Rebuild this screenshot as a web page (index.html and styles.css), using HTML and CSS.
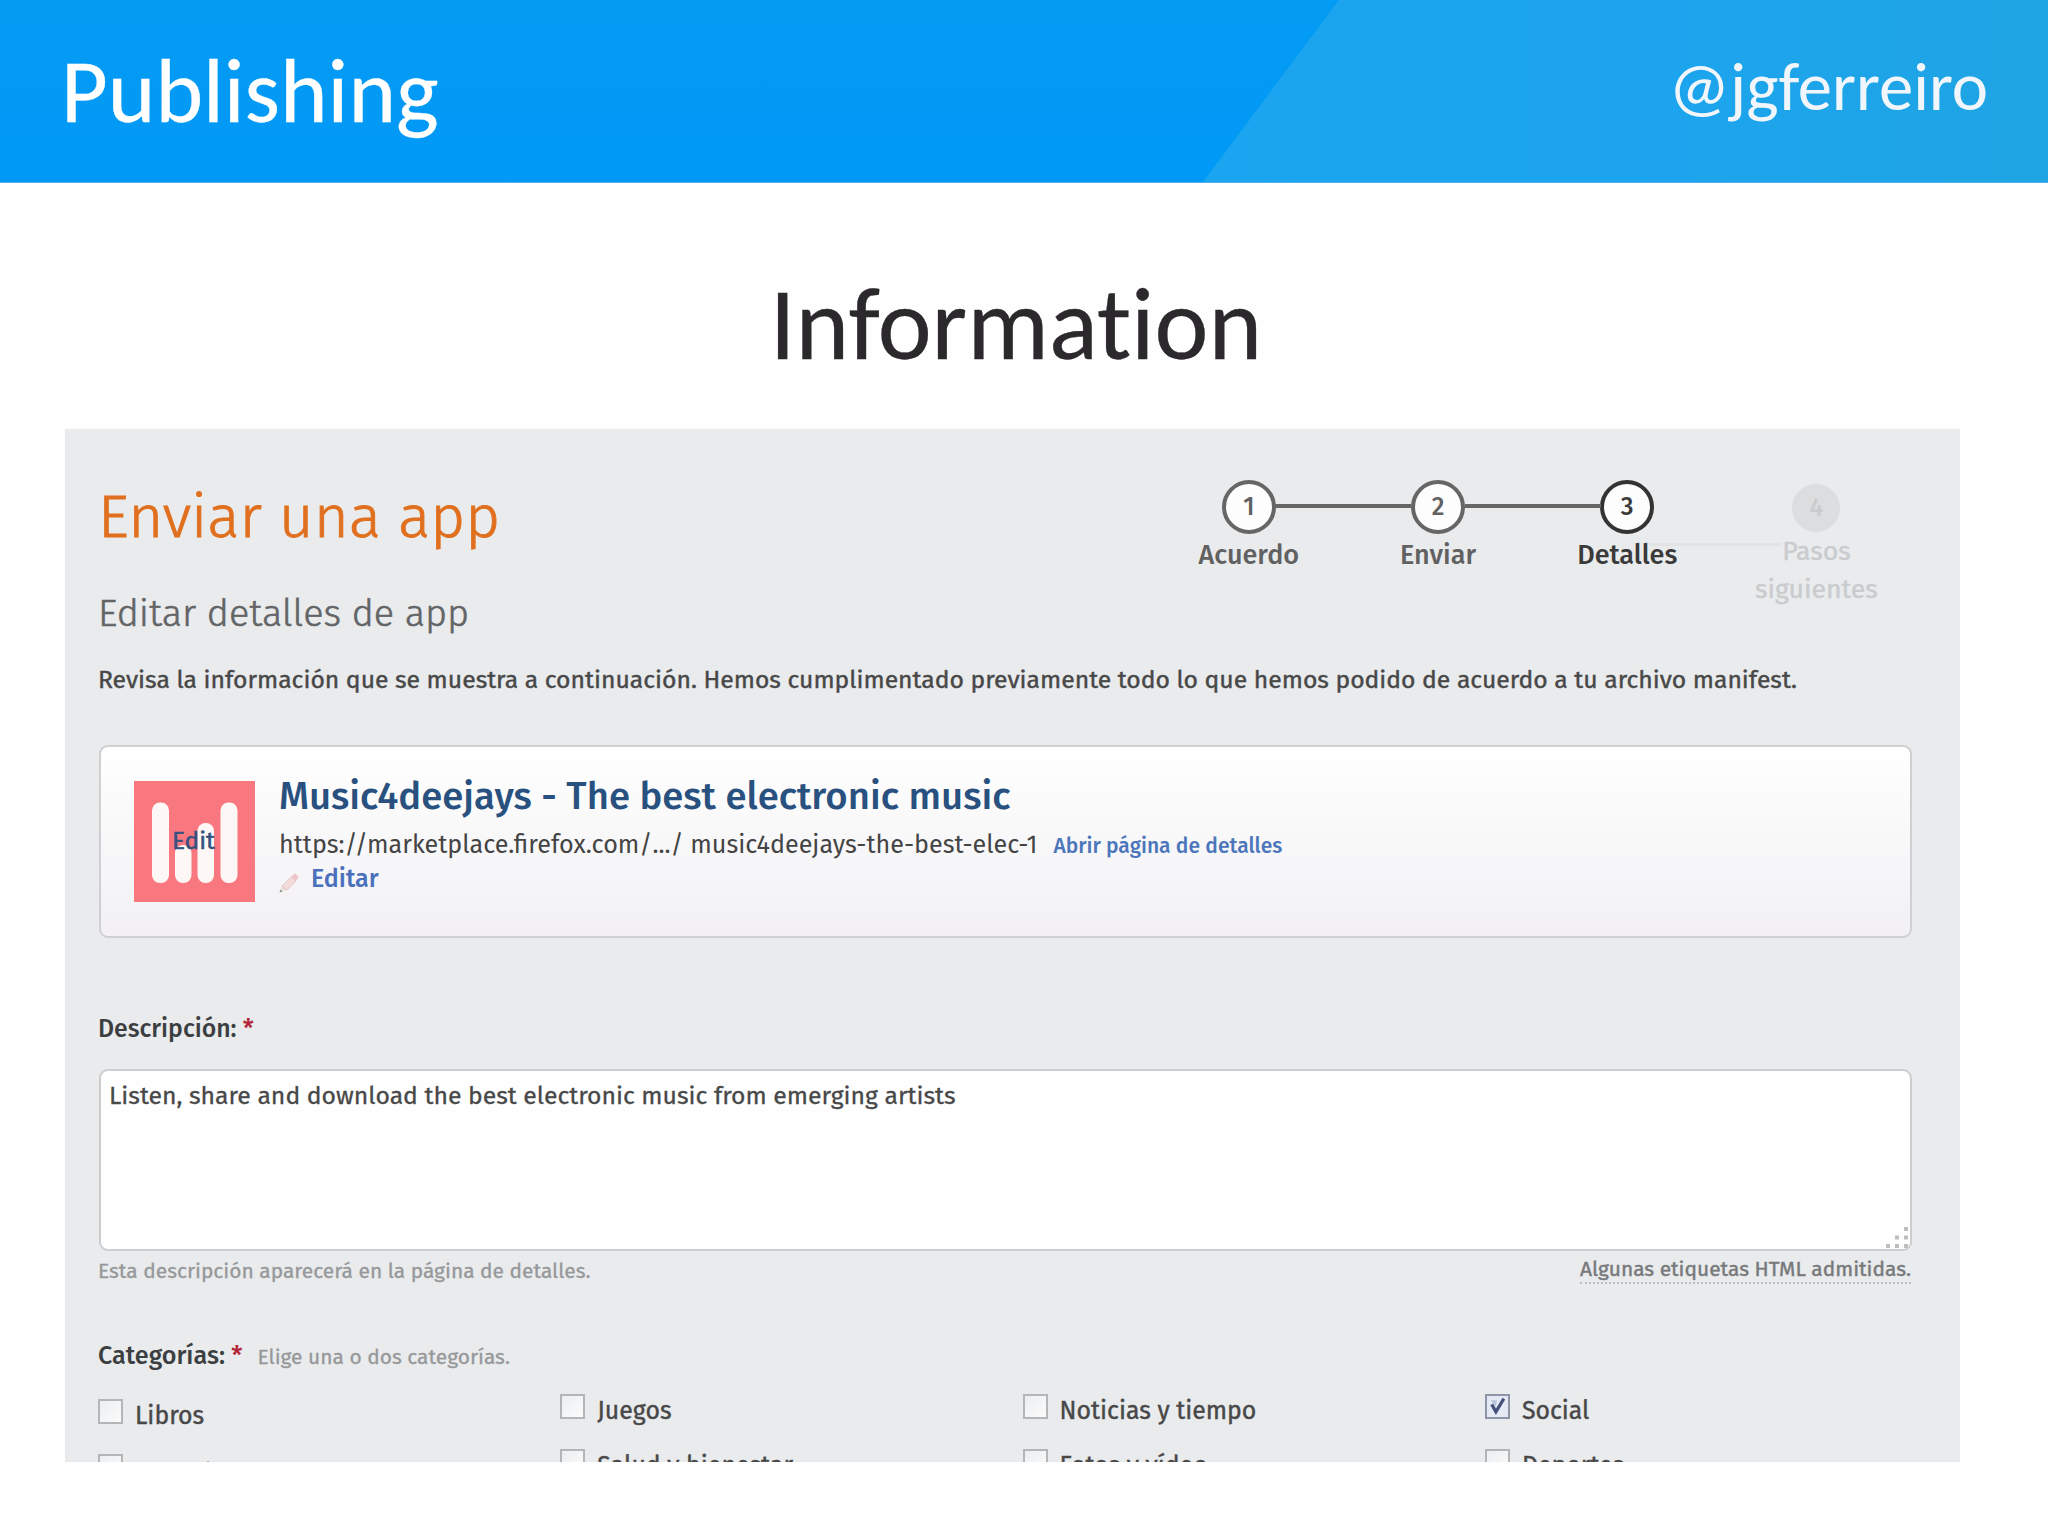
FILE: index.html
```html
<!DOCTYPE html>
<html lang="es">
<head>
<meta charset="utf-8">
<title>Publishing</title>
<link rel="stylesheet" href="styles.css">
</head>
<body>
<header class="topbar">
  <h1 class="topbar-title">Publishing</h1>
  <span class="topbar-handle">@jgferreiro</span>
</header>
<h2 class="slide-title">Information</h2>
<main class="panel">
  <div class="intro">
    <div class="headings">
      <h3 class="app-title">Enviar una app</h3>
      <h4 class="app-subtitle">Editar detalles de app</h4>
    </div>
    <ol class="steps">
      <li class="step"><span class="dot">1</span><span class="step-name">Acuerdo</span></li>
      <li class="step linked"><span class="dot">2</span><span class="step-name">Enviar</span></li>
      <li class="step linked current"><span class="dot">3</span><span class="step-name">Detalles</span></li>
      <li class="step pending"><span class="dot">4</span><span class="step-name">Pasos<br>siguientes</span></li>
    </ol>
  </div>
  <p class="lead">Revisa la información que se muestra a continuación. Hemos cumplimentado previamente todo lo que hemos podido de acuerdo a tu archivo manifest.</p>

  <section class="card">
    <div class="icon">
      <svg class="icon-art" viewBox="0 0 121 121" aria-hidden="true">
        <rect width="121" height="121" fill="#f9787f"/>
        <g fill="#fdf8f6">
          <rect x="18" y="21.5" width="17" height="80.500" rx="8"/>
          <rect x="41" y="64" width="16.500" height="38" rx="8"/>
          <rect x="63.500" y="42" width="16.500" height="60" rx="8"/>
          <rect x="86.500" y="21.500" width="17" height="80.500" rx="8"/>
        </g>
      </svg>
      <span class="icon-edit">Edit</span>
    </div>
    <div class="card-body">
      <div class="card-title">Music4deejays - The best electronic music</div>
      <div class="card-line"><span class="url">https://marketplace.firefox.com/.../ music4deejays-the-best-elec-1</span><a class="open">Abrir página de detalles</a></div>
      <div class="card-line edit-line">
        <svg class="pencil" viewBox="0 0 20 20" aria-hidden="true">
          <path d="M1 19l2-6 5 4z" fill="#e6dfd6"/>
          <path d="M3 13L12 4l5 4-9 9z" fill="#f4dcdc" stroke="#dcc0c0" stroke-width=".8"/>
          <path d="M12 4l3-3q1-.6 2 .2l2 2q.8 1-.2 2L17 8z" fill="#f0c3ca"/>
          <path d="M0.500 19.500l1-3 2 2z" fill="#8d8d8d"/>
        </svg>
        <a class="edit">Editar</a>
      </div>
    </div>
  </section>

  <label class="field-label desc-label">Descripción: <span class="req">*</span></label>
  <div class="textarea">Listen, share and download the best electronic music from emerging artists
    <svg class="grip" viewBox="0 0 22 21" aria-hidden="true">
      <g fill="#bdbdbd"><rect x="18" width="4" height="4"/><rect x="9" y="8.500" width="4" height="4"/><rect x="18" y="8.500" width="4" height="4"/><rect y="17" width="4" height="4"/><rect x="9" y="17" width="4" height="4"/><rect x="18" y="17" width="4" height="4"/></g>
    </svg>
  </div>
  <div class="help-row">
    <span class="help">Esta descripción aparecerá en la página de detalles.</span>
    <span class="html-note">Algunas etiquetas HTML admitidas.</span>
  </div>

  <div class="cat-head">
    <span class="field-label cat-label">Categorías: <span class="req">*</span></span>
    <span class="help">Elige una o dos categorías.</span>
  </div>
  <div class="cats">
    <label class="cat first"><span class="box"></span><span class="cat-name">Libros</span></label>
    <label class="cat"><span class="box"></span><span class="cat-name">Juegos</span></label>
    <label class="cat"><span class="box"></span><span class="cat-name">Noticias y tiempo</span></label>
    <label class="cat"><span class="box checked"><svg class="tick" viewBox="0 0 16 18" aria-hidden="true"><path d="M1.500 3h6l-1 6z" fill="#b9c3de"/><path d="M2.500 7L6.500 14L14 1.500" fill="none" stroke="#45507c" stroke-width="3"/></svg></span><span class="cat-name">Social</span></label>
    <label class="cat first"><span class="box"></span><span class="cat-name lower">Negocios</span></label>
    <label class="cat"><span class="box"></span><span class="cat-name">Salud y bienestar</span></label>
    <label class="cat"><span class="box"></span><span class="cat-name">Fotos y vídeo</span></label>
    <label class="cat"><span class="box"></span><span class="cat-name">Deportes</span></label>
  </div>
</main>
</body>
</html>
```
FILE: styles.css
```css
* { box-sizing: border-box; }

body {
  margin: 0;
  width: 2048px;
  height: 1536px;
  overflow: hidden;
  background: #fefefe;
  color: #484848;
  font-family: "Fira Sans", "Noto Sans", sans-serif;
}

h1, h2, h3, h4, p, ol { margin: 0; padding: 0; font-weight: 400; }

/* Slide header */
.topbar {
  position: relative;
  display: flex;
  justify-content: space-between;
  height: 183px;
  padding: 0 60px 0 61px;
  border-bottom: 1px solid #4fb2ee;
  background: linear-gradient(180deg, #049bf3, #0199f7);
  font-family: Carlito, Calibri, Lato, sans-serif;
}
.topbar::before {
  content: "";
  position: absolute;
  inset: 0 0 0 1203px;
  background: linear-gradient(90deg, #1ba4ef 0%, #1ca4ee 55%, #1fa5e3 100%);
  clip-path: polygon(136px 0, 100% 0, 100% 100%, 0 100%);
}
.topbar-title {
  padding-top: 36px;
  font-size: 90.6px;
  line-height: 110px;
  color: #fff;
  -webkit-text-stroke: .3px #fff;
}
.topbar-handle {
  position: relative;
  padding-top: 45px;
  font-size: 68.7px;
  line-height: 84px;
  color: #f0f6fb;
}

.slide-title {
  height: 246px;
  padding: 79px 16px 0 0;
  font-family: Carlito, Calibri, Lato, sans-serif;
  font-size: 102.2px;
  line-height: 124px;
  font-variant-ligatures: none;
  text-align: center;
  color: #2b292c;
  -webkit-text-stroke: .3px #2b292c;
}

/* Submission form */
.panel {
  width: 1895px;
  height: 1033px;
  margin-left: 65px;
  padding: 53px 49px 0 33px;
  overflow: hidden;
  background: #e9ebed;
}
.intro { display: flex; justify-content: space-between; align-items: flex-start; }
.app-title {
  font-size: 60.2px;
  line-height: 71px;
  font-weight: 300;
  color: #e0701f;
  -webkit-text-stroke: .9px #e0701f;
}
.app-subtitle {
  margin-top: 39px;
  font-size: 37.9px;
  line-height: 44px;
  font-weight: 300;
  color: #626466;
  -webkit-text-stroke: .6px #626466;
}

.steps { display: flex; margin-top: -2px; list-style: none; }
.step {
  position: relative;
  display: flex;
  flex-direction: column;
  align-items: center;
  width: 189.2px;
  color: #616161;
}
.dot {
  display: flex;
  align-items: center;
  justify-content: center;
  width: 54px;
  height: 54px;
  border: 4px solid #666;
  border-radius: 50%;
  background: #fdfdfd;
  font-size: 25px;
  font-weight: 500;
}
.step-name {
  margin-top: 2px;
  font-size: 27px;
  line-height: 38px;
  font-weight: 500;
  text-align: center;
}
.linked::before, .pending::before {
  content: "";
  position: absolute;
  top: 24px;
  left: -68px;
  width: 136px;
  height: 4px;
  background: #666;
}
.current { color: #3a3a3a; }
.current .dot { border-color: #333; }
.pending { color: #c9cbcd; }
.pending::before { top: 63px; left: -73px; width: 132px; height: 3px; background: #e1e3e5; }
.pending .dot {
  width: 48px;
  height: 48px;
  margin-top: 4px;
  border: 0;
  background: #dcdddf;
}
.pending .step-name { margin-top: 0; font-size: 26.6px; font-weight: 400; -webkit-text-stroke: .4px #c9cbcd; }

.lead {
  margin-top: 29px;
  font-size: 24.72px;
  line-height: 30px;
  white-space: nowrap;
  -webkit-text-stroke: .4px #484848;
}

.card {
  display: flex;
  height: 193px;
  margin: 50px -1px 0 1px;
  padding: 34px 33px 0;
  border: 2px solid #cfd0d2;
  border-radius: 9px;
  background: linear-gradient(180deg, #fff, #f2f0f3);
}
.icon { position: relative; width: 121px; height: 121px; }
.icon-art { display: block; width: 121px; height: 121px; }
.icon-edit {
  position: absolute;
  top: 45px;
  left: 38px;
  font-size: 24.4px;
  line-height: 30px;
  color: #36507f;
  -webkit-text-stroke: .5px #36507f;
}
.card-body { margin: -7px 0 0 24px; white-space: nowrap; }
.card-title { font-size: 38.3px; line-height: 44px; font-weight: 500; color: #28517f; }
.card-line { display: flex; line-height: 34px; }
.card-title + .card-line { margin-top: 10px; }
.url { font-size: 25.15px; color: #444; }
.open { margin-left: 16px; font-size: 21.05px; line-height: 36px; font-weight: 500; color: #4b76bb; }
.edit-line { gap: 12px; margin-top: -2px; }
.pencil { width: 20px; height: 20px; margin-top: 11px; }
.edit { font-size: 25.1px; font-weight: 500; color: #4a6fbc; }

.field-label { font-size: 24.8px; line-height: 30px; font-weight: 500; color: #3c3f42; }
.req { font-weight: 500; color: #b32638; }
.desc-label { display: block; margin-top: 76px; }
.textarea {
  position: relative;
  height: 182px;
  margin: 25px -1px 0 1px;
  padding: 10px 8px;
  border: 2px solid #cccdcf;
  border-radius: 9px;
  background: #fefefe;
  font-size: 24.77px;
  line-height: 30px;
  -webkit-text-stroke: .3px #484848;
}
.grip { position: absolute; right: 2px; bottom: 1px; width: 22px; height: 21px; }

.help-row { display: flex; justify-content: space-between; align-items: flex-start; margin-top: 6px; }
.help { font-size: 20.95px; line-height: 29px; color: #96989a; -webkit-text-stroke: .3px #96989a; }
.html-note {
  border-bottom: 2px dotted #bcbdbf;
  font-size: 20.93px;
  line-height: 25px;
  color: #77797b;
  -webkit-text-stroke: .4px #77797b;
}

.cat-head { display: flex; align-items: baseline; gap: 15px; height: 30px; margin-top: 55px; }
.cat-label { font-size: 25.2px; }
.cats {
  display: grid;
  grid-template-columns: repeat(4, 462.3px);
  grid-auto-rows: 55px;
  margin-top: 23px;
}
.cat { display: flex; align-items: flex-start; gap: 12px; font-size: 24.85px; line-height: 32px; white-space: nowrap; }
.cat-name { margin-top: 1px; -webkit-text-stroke: .4px #484848; }
.lower { margin-top: 4px; }
.first { padding-top: 5px; }
.box {
  display: flex;
  align-items: center;
  justify-content: center;
  width: 25px;
  height: 25px;
  border: 2px solid #b3b5b7;
  background: linear-gradient(135deg, #eceeef, #fbfbfc);
}
.checked { border-color: #8f95a8; background: #e4e9f5; }
.tick { width: 17px; height: 19px; }
```
